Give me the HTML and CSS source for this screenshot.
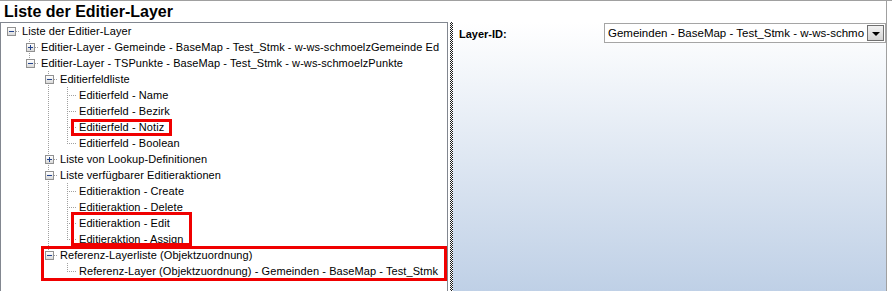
FILE: index.html
```html
<!DOCTYPE html>
<html>
<head>
<meta charset="utf-8">
<link rel="stylesheet" href="styles.css">
</head>
<body>
<div class="window">
  <div class="title">Liste der Editier-Layer</div>
  <div class="main">
    <div class="tree">
      <div class="row"><span class="conn root"><span class="box minus"></span></span><span class="label">Liste der Editier-Layer</span></div>
      <div class="row"><span class="ind"></span><span class="conn mid"><span class="box plus"></span></span><span class="label">Editier-Layer - Gemeinde - BaseMap - Test_Stmk - w-ws-schmoelzGemeinde Ed</span></div>
      <div class="row"><span class="ind"></span><span class="conn last"><span class="box minus"></span></span><span class="label">Editier-Layer - TSPunkte - BaseMap - Test_Stmk - w-ws-schmoelzPunkte</span></div>
      <div class="row"><span class="ind"></span><span class="ind"></span><span class="conn mid"><span class="box minus"></span></span><span class="label">Editierfeldliste</span></div>
      <div class="row"><span class="ind"></span><span class="ind"></span><span class="ind v"></span><span class="conn mid"></span><span class="label">Editierfeld - Name</span></div>
      <div class="row"><span class="ind"></span><span class="ind"></span><span class="ind v"></span><span class="conn mid"></span><span class="label">Editierfeld - Bezirk</span></div>
      <div class="row"><span class="ind"></span><span class="ind"></span><span class="ind v"></span><span class="conn mid"></span><span class="label">Editierfeld - Notiz</span></div>
      <div class="row"><span class="ind"></span><span class="ind"></span><span class="ind v"></span><span class="conn last"></span><span class="label">Editierfeld - Boolean</span></div>
      <div class="row"><span class="ind"></span><span class="ind"></span><span class="conn mid"><span class="box plus"></span></span><span class="label">Liste von Lookup-Definitionen</span></div>
      <div class="row"><span class="ind"></span><span class="ind"></span><span class="conn mid"><span class="box minus"></span></span><span class="label">Liste verfügbarer Editieraktionen</span></div>
      <div class="row"><span class="ind"></span><span class="ind"></span><span class="ind v"></span><span class="conn mid"></span><span class="label">Editieraktion - Create</span></div>
      <div class="row"><span class="ind"></span><span class="ind"></span><span class="ind v"></span><span class="conn mid"></span><span class="label">Editieraktion - Delete</span></div>
      <div class="row"><span class="ind"></span><span class="ind"></span><span class="ind v"></span><span class="conn mid"></span><span class="label">Editieraktion - Edit</span></div>
      <div class="row"><span class="ind"></span><span class="ind"></span><span class="ind v"></span><span class="conn last"></span><span class="label">Editieraktion - Assign</span></div>
      <div class="row"><span class="ind"></span><span class="ind"></span><span class="conn last"><span class="box minus"></span></span><span class="label">Referenz-Layerliste (Objektzuordnung)</span></div>
      <div class="row"><span class="ind"></span><span class="ind"></span><span class="ind"></span><span class="conn last"></span><span class="label">Referenz-Layer (Objektzuordnung) - Gemeinden - BaseMap - Test_Stmk</span></div>

      <div class="mark mark-notiz"></div>
      <div class="mark mark-edit"></div>
      <div class="mark mark-ref"></div>
    </div>
    <div class="splitter"></div>
    <div class="panel">
      <div class="field">
        <span class="field-label">Layer-ID:</span>
        <div class="combo">
          <span class="combo-text">Gemeinden - BaseMap - Test_Stmk - w-ws-schmo</span>
          <span class="combo-btn"><span class="arrow"></span></span>
        </div>
      </div>
    </div>
  </div>
</div>
</body>
</html>
```
FILE: styles.css
```css
html, body {
  margin: 0;
  padding: 0;
  background: #ffffff;
}

body {
  width: 892px;
  height: 291px;
  overflow: hidden;
  font-family: "Liberation Sans", Arial, sans-serif;
  font-size: 11px;
  color: #000;
}

.window {
  border-top: 1px solid #a0a0a0;
  height: 290px;
  display: flex;
  flex-direction: column;
}

.title {
  height: 21px;
  line-height: 21px;
  padding-left: 4px;
  font-size: 16px;
  font-weight: bold;
  color: #000;
  border-right: 1px solid #a0a0a0;
  margin-right: 5px;
}

.main {
  display: flex;
  flex: 1;
  min-height: 0;
}

.tree {
  position: relative;
  width: 446px;
  border: 1px solid #828790;
  border-bottom: none;
  background: #fff;
  overflow: hidden;
}

.row {
  display: flex;
  height: 16px;
  line-height: 16px;
  white-space: nowrap;
}

.ind, .conn {
  flex: 0 0 19px;
  width: 19px;
  height: 16px;
}

.ind.v {
  background: repeating-linear-gradient(to bottom, #a0a0a0 0 1px, transparent 1px 2px) 9px 0 / 1px 16px no-repeat;
}

.conn {
  display: flex;
  align-items: center;
  justify-content: center;
}

.conn.root {
  background: repeating-linear-gradient(to right, #a0a0a0 0 1px, transparent 1px 2px) 9px 8px / 10px 1px no-repeat;
}

.conn.mid {
  background:
    repeating-linear-gradient(to right, #a0a0a0 0 1px, transparent 1px 2px) 11px 8px / 8px 1px no-repeat,
    repeating-linear-gradient(to bottom, #a0a0a0 0 1px, transparent 1px 2px) 9px 0 / 1px 16px no-repeat;
}

.conn.last {
  background:
    repeating-linear-gradient(to right, #a0a0a0 0 1px, transparent 1px 2px) 11px 8px / 8px 1px no-repeat,
    repeating-linear-gradient(to bottom, #a0a0a0 0 1px, transparent 1px 2px) 9px 0 / 1px 9px no-repeat;
}

.box {
  box-sizing: border-box;
  width: 9px;
  height: 9px;
  border: 1px solid #919191;
  margin-left: 1px;
  margin-top: 1px;
}

.box.minus {
  background:
    linear-gradient(#24448c, #24448c) center / 5px 1px no-repeat,
    linear-gradient(#ffffff, #d9d9d9);
}

.box.plus {
  background:
    linear-gradient(#24448c, #24448c) center / 5px 1px no-repeat,
    linear-gradient(#24448c, #24448c) center / 1px 5px no-repeat,
    linear-gradient(#ffffff, #d9d9d9);
}

.label {
  padding-left: 2px;
  color: #000;
  letter-spacing: 0.08px;
}

.mark {
  position: absolute;
  box-sizing: border-box;
  border: 3px solid #f00000;
}

.mark-notiz {
  left: 70px;
  top: 96px;
  width: 101px;
  height: 17px;
}

.mark-edit {
  left: 70px;
  top: 189px;
  width: 121px;
  height: 34px;
}

.mark-ref {
  left: 40px;
  top: 223px;
  width: 406px;
  height: 35px;
}

.splitter {
  flex: 0 0 3px;
  margin-left: 2px;
  background: repeating-conic-gradient(#1a1a1a 0 25%, #ffffff 0 50%) 0 0 / 2px 2px;
}

.panel {
  flex: 1;
  border-right: 1px solid #a0a0a0;
  margin-right: 5px;
  background: linear-gradient(to bottom, #ffffff 0%, #bfd0e6 100%);
  padding-top: 1px;
}

.field {
  display: flex;
  align-items: center;
  justify-content: space-between;
  padding-left: 6px;
}

.field-label {
  font-weight: bold;
  color: #000;
  padding-top: 1px;
}

.combo {
  box-sizing: border-box;
  width: 282px;
  height: 20px;
  border: 1px solid #a5a5a5;
  background: #fff;
  display: flex;
  align-items: center;
  padding: 0 1px 0 3px;
}

.combo-text {
  flex: 1;
  overflow: hidden;
  white-space: nowrap;
  font-size: 11.5px;
  color: #000;
}

.combo-btn {
  box-sizing: border-box;
  width: 17px;
  height: 16px;
  border: 1px solid #707070;
  background: linear-gradient(#f2f2f2, #d4d4d4);
  display: flex;
  align-items: center;
  justify-content: center;
}

.arrow {
  width: 0;
  height: 0;
  border-left: 4px solid transparent;
  border-right: 4px solid transparent;
  border-top: 4px solid #000;
  margin-top: 1px;
}
```
